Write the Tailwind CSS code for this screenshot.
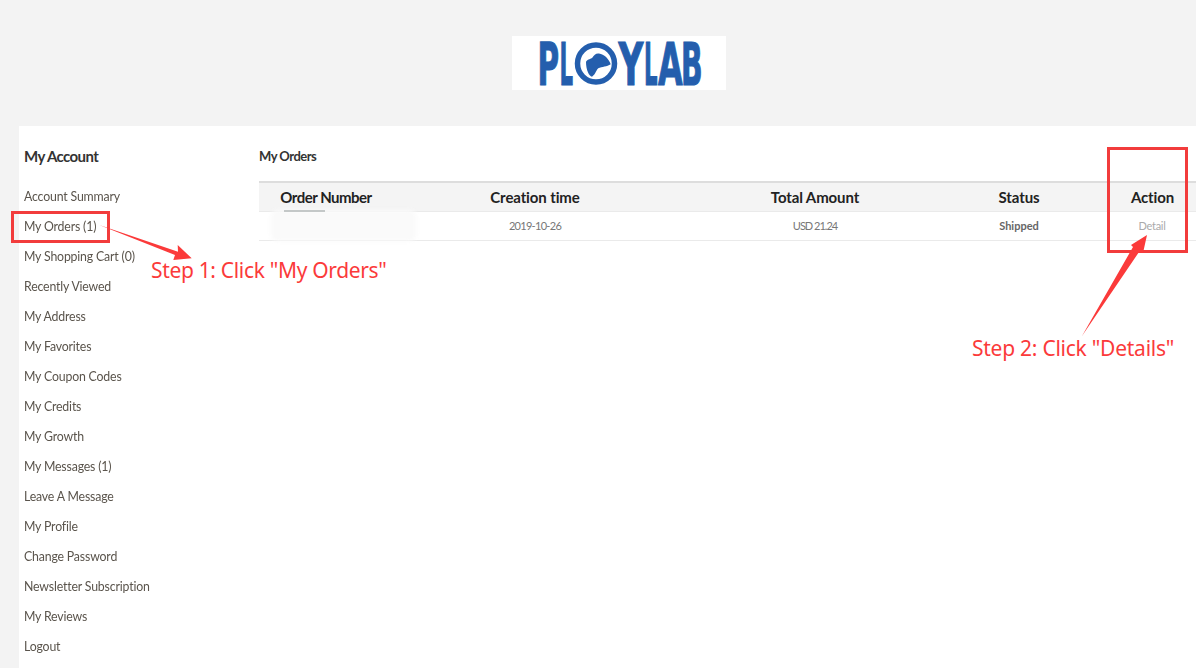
<!DOCTYPE html>
<html lang="en">
<head>
<meta charset="utf-8">
<title>My Orders</title>
<script src="https://cdn.jsdelivr.net/npm/@tailwindcss/browser@4"></script>
</head>
<body class="relative w-[1196px] h-[668px] overflow-hidden bg-[#f3f3f3] font-['Lato','Liberation_Sans',sans-serif]">
  <header class="h-[126px] flex justify-center items-start pt-9 pl-[42px]">
    <svg class="w-[214px] h-[54px] bg-white overflow-visible" viewBox="0 0 214 54" aria-label="PLOYLAB">
      <g fill="#245ead" stroke="#245ead" stroke-width="1.2" font-family="DejaVu Sans" font-weight="700" font-size="59">
        <text transform="translate(25.5,48.5) scale(0.5,1)">P</text>
        <text transform="translate(47.5,48.5) scale(0.36,1)">L</text>
        <text transform="translate(106.5,48.5) scale(0.58,1)">Y</text>
        <text transform="translate(132,48.5) scale(0.36,1)">L</text>
        <text transform="translate(146,48.5) scale(0.54,1)">A</text>
        <text transform="translate(169,48.5) scale(0.48,1)">B</text>
      </g>
      <circle cx="84" cy="27.5" r="18.5" fill="#fff" stroke="#245ead" stroke-width="5.5"/>
      <path d="M74 25.7C76 23 79 23 80.5 21.5C82 19 84 17 87 17.5C92 18 97 23 98.7 28.3C95 31 90 30.5 86.3 32.3C84 34 84 38 80 40.7C77 40 74 34 74 25.7Z" fill="#245ead"/>
    </svg>
  </header>
  <div class="ml-[19px] h-[542px] bg-white flex">
    <aside class="w-[240px] pl-[5px] shrink-0">
      <h2 class="h-[55px] pt-[20px] text-[15px] leading-5 font-bold text-[#333] tracking-[-0.6px]">My Account</h2>
      <ul class="text-[14px] text-[#5a544c] tracking-[-0.2px] leading-[30px] origin-left scale-x-[0.88] whitespace-nowrap">
        <li>Account Summary</li>
        <li>My Orders (1)</li>
        <li>My Shopping Cart (0)</li>
        <li>Recently Viewed</li>
        <li>My Address</li>
        <li>My Favorites</li>
        <li>My Coupon Codes</li>
        <li>My Credits</li>
        <li>My Growth</li>
        <li>My Messages (1)</li>
        <li>Leave A Message</li>
        <li>My Profile</li>
        <li>Change Password</li>
        <li>Newsletter Subscription</li>
        <li>My Reviews</li>
        <li>Logout</li>
      </ul>
    </aside>
    <main class="flex-1 min-w-0">
      <h1 class="h-[55px] pt-[21px] text-[13px] leading-[18px] font-bold text-[#333] tracking-[-0.5px]">My Orders</h1>
      <div class="grid grid-cols-[134px_284px_276px_132px_1fr] h-[31px] border-t-2 border-b border-t-[#dddddd] border-b-[#eaeaea] bg-[#f4f4f4] text-[15px] font-bold text-[#222] text-center items-center tracking-[-0.12px]">
        <div class="tracking-[-0.5px]">Order Number</div>
        <div>Creation time</div>
        <div>Total Amount</div>
        <div>Status</div>
        <div class="pl-[24px]">Action</div>
      </div>
      <div class="relative grid grid-cols-[134px_284px_276px_132px_1fr] h-[29px] border-b border-[#eaeaea] text-[11px] text-[#777] text-center items-center">
        <div></div>
        <div class="tracking-[-0.7px]">2019-10-26</div>
        <div class="tracking-[-1px]">USD 21.24</div>
        <div class="font-bold text-[#666]">Shipped</div>
        <div class="pl-[23px] text-[#aaa] tracking-[-0.3px]">Detail</div>
        <div class="absolute left-[12px] -top-[2px] w-[145px] h-[31px] rounded-md bg-[#fafafa] blur-[2px]"></div>
        <div class="absolute left-[25px] -top-[2px] w-[41px] h-[2px] bg-[#c4c8c8]"></div>
      </div>
    </main>
  </div>

  <!-- annotation layer -->
  <div class="absolute left-[11px] top-[211px] w-[99px] h-[32px] border-[3px] border-[#f23c3c]"></div>
  <div class="absolute left-[1107px] top-[147px] w-[81px] h-[106px] border-[3px] border-[#f23c3c]"></div>
  <svg class="absolute left-0 top-0 w-[1196px] h-[668px] pointer-events-none" viewBox="0 0 1196 668">
    <path d="M99.3 225L178 251.7L177.7 245L191.7 258.3L173.3 260L175 255Z" fill="#fb3a3a"/>
    <path d="M1082 336L1133 247L1131 245L1147 235L1143 253L1139 252Z" fill="#fb3a3a"/>
  </svg>
  <div class="absolute left-[151px] top-[256px] text-[21px] leading-7 text-[#fb3a3a] font-['Noto_Sans',sans-serif] whitespace-nowrap tracking-[-0.33px]">Step 1: Click "My Orders"</div>
  <div class="absolute left-[972px] top-[334px] text-[21px] leading-7 text-[#fb3a3a] font-['Noto_Sans',sans-serif] whitespace-nowrap tracking-[-0.25px]">Step 2: Click "Details"</div>
</body>
</html>
